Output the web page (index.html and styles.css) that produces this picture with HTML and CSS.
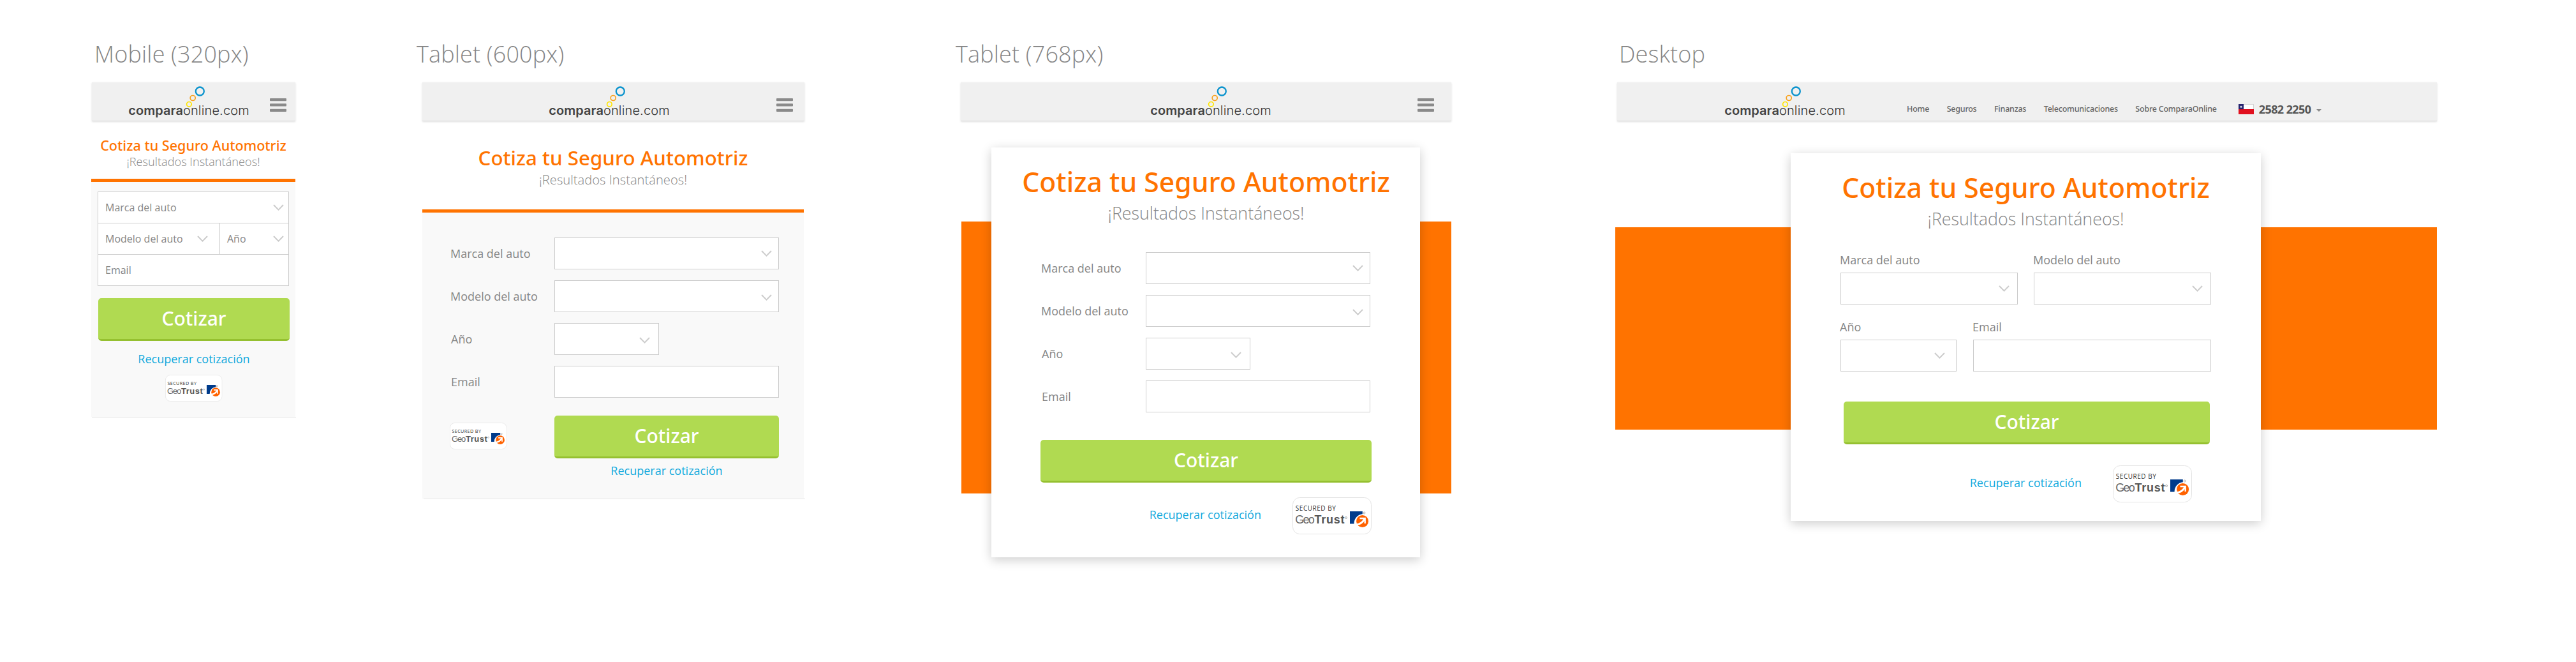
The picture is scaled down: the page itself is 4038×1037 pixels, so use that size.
FILE: index.html
```html
<!DOCTYPE html>
<html lang="es">
<head>
<meta charset="utf-8">
<title>Cotiza tu Seguro Automotriz</title>
<link rel="stylesheet" href="styles.css">
</head>
<body>

<svg class="defs" width="0" height="0" aria-hidden="true">
  <symbol id="dots" viewBox="0 0 192 54">
    <circle cx="113.3" cy="11" r="6.5" fill="none" stroke="#0a93cd" stroke-width="2.3"/>
    <circle cx="102.2" cy="21.5" r="4" fill="none" stroke="#f9a11b" stroke-width="1.7"/>
    <circle cx="96.4" cy="31.3" r="3.8" fill="none" stroke="#ffe600" stroke-width="1.7"/>
  </symbol>
  <symbol id="menu" viewBox="0 0 26 21">
    <path fill="#8a8a8a" d="M1 0h24a1 1 0 0 1 1 1v2.3a1 1 0 0 1-1 1H1a1 1 0 0 1-1-1V1a1 1 0 0 1 1-1zM1 8.3h24a1 1 0 0 1 1 1v2.3a1 1 0 0 1-1 1H1a1 1 0 0 1-1-1V9.300a1 1 0 0 1 1-1zM1 16.700h24a1 1 0 0 1 1 1V20a1 1 0 0 1-1 1H1a1 1 0 0 1-1-1v-2.300a1 1 0 0 1 1-1z"/>
  </symbol>
  <symbol id="chevron" viewBox="0 0 17 10">
    <path d="M1 1l7.500 7.600L16 1" fill="none" stroke="#ccc" stroke-width="2"/>
  </symbol>
  <symbol id="seal-mark" viewBox="0 0 124 58">
    <rect x=".5" y=".5" width="123" height="57" rx="11" fill="#fff" stroke="#e3e3e3"/>
    <path fill="#003b8b" d="M90 22h19.800v4.200A14.800 14.800 0 0 0 96.600 41.500H90z"/>
    <circle cx="109.600" cy="37.500" r="9.500" fill="#ff6200"/>
    <path fill="none" stroke="#fff" stroke-width="2.300" d="M105.500 33h8.200v8"/>
    <path fill="none" stroke="#fff" stroke-width="3" d="M113 34c-2.500 4.500-6 8.500-13.500 8.800"/>
    <circle cx="112.500" cy="24.500" r="1.500" fill="none" stroke="#999" stroke-width=".8"/>
    <circle cx="84" cy="32" r="1.500" fill="none" stroke="#999" stroke-width=".8"/>
  </symbol>
  <symbol id="flag" viewBox="0 0 24 16">
    <path fill="#fff" d="M0 0h24v8H0z"/>
    <path fill="none" stroke="#bbb" stroke-width=".7" d="M8 .4h15.600V8"/>
    <path fill="#e1101f" d="M0 8h24v8H0z"/>
    <path fill="#26246f" d="M0 0h8v8.200H0z"/>
    <path fill="#fff" d="M4 2.200l.6 1.300 1.400.1-1 1 .3 1.400L4 5.300 2.700 6 3 4.600l-1-1 1.400-.1z"/>
  </symbol>
</svg>

<main class="boards">

  <section class="board mobile">
    <h2 class="board-name">Mobile (320px)</h2>
    <header class="bar">
      <svg class="logo" viewBox="0 0 192 54"><use href="#dots"/><text x="1.300" y="47.600" class="logo-strong" textLength="85.600">compara</text><text x="86.900" y="47.600" class="logo-thin" textLength="103.800">online.com</text></svg>
      <svg class="menu"><use href="#menu"/></svg>
    </header>
    <div class="hero">
      <h1 class="title">Cotiza tu Seguro Automotriz</h1>
      <p class="subtitle">¡Resultados Instantáneos!</p>
    </div>
    <div class="panel">
      <div class="stack">
        <div class="cell wide">Marca del auto<svg class="chevron"><use href="#chevron"/></svg></div>
        <div class="cell model">Modelo del auto<svg class="chevron"><use href="#chevron"/></svg></div>
        <div class="cell year">Año<svg class="chevron"><use href="#chevron"/></svg></div>
        <div class="cell wide">Email</div>
      </div>
      <div class="button">Cotizar</div>
      <a class="link">Recuperar cotización</a>
      <svg class="seal small" viewBox="0 0 124 58"><use href="#seal-mark"/><text x="4.800" y="21.400" class="seal-top" textLength="63">SECURED BY</text><text x="4.300" y="41.300" class="seal-thin" textLength="30.500">Geo</text><text x="34.500" y="41.300" class="seal-bold" textLength="47">Trust</text></svg>
    </div>
    <div class="edge"></div>
  </section>

  <section class="board tablet-600">
    <h2 class="board-name">Tablet (600px)</h2>
    <header class="bar">
      <svg class="logo" viewBox="0 0 192 54"><use href="#dots"/><text x="1.300" y="47.600" class="logo-strong" textLength="85.600">compara</text><text x="86.900" y="47.600" class="logo-thin" textLength="103.800">online.com</text></svg>
      <svg class="menu"><use href="#menu"/></svg>
    </header>
    <div class="hero">
      <h1 class="title">Cotiza tu Seguro Automotriz</h1>
      <p class="subtitle">¡Resultados Instantáneos!</p>
    </div>
    <div class="panel">
      <div class="rows">
        <span class="label">Marca del auto</span>
        <div class="field first"><svg class="chevron"><use href="#chevron"/></svg></div>
        <span class="label">Modelo del auto</span>
        <div class="field"><svg class="chevron"><use href="#chevron"/></svg></div>
        <span class="label nudge">Año</span>
        <div class="field short"><svg class="chevron"><use href="#chevron"/></svg></div>
        <span class="label nudge">Email</span>
        <div class="field"></div>
      </div>
      <div class="submit">
        <svg class="seal small" viewBox="0 0 124 58"><use href="#seal-mark"/><text x="4.800" y="21.400" class="seal-top" textLength="63">SECURED BY</text><text x="4.300" y="41.300" class="seal-thin" textLength="30.500">Geo</text><text x="34.500" y="41.300" class="seal-bold" textLength="47">Trust</text></svg>
        <div class="submit-main">
          <div class="button">Cotizar</div>
          <a class="link">Recuperar cotización</a>
        </div>
      </div>
    </div>
    <div class="edge"></div>
  </section>

  <section class="board tablet-768">
    <h2 class="board-name">Tablet (768px)</h2>
    <header class="bar">
      <svg class="logo" viewBox="0 0 192 54"><use href="#dots"/><text x="1.300" y="47.600" class="logo-strong" textLength="85.600">compara</text><text x="86.900" y="47.600" class="logo-thin" textLength="103.800">online.com</text></svg>
      <svg class="menu"><use href="#menu"/></svg>
    </header>
    <div class="stage">
      <div class="card">
        <h1 class="title">Cotiza tu Seguro Automotriz</h1>
        <p class="subtitle">¡Resultados Instantáneos!</p>
        <div class="rows">
          <span class="label">Marca del auto</span>
          <div class="field first"><svg class="chevron"><use href="#chevron"/></svg></div>
          <span class="label">Modelo del auto</span>
          <div class="field"><svg class="chevron"><use href="#chevron"/></svg></div>
          <span class="label nudge">Año</span>
          <div class="field short"><svg class="chevron"><use href="#chevron"/></svg></div>
          <span class="label nudge">Email</span>
          <div class="field"></div>
        </div>
        <div class="button">Cotizar</div>
        <div class="foot">
          <a class="link">Recuperar cotización</a>
          <svg class="seal" viewBox="0 0 124 58"><use href="#seal-mark"/><text x="4.800" y="21.400" class="seal-top" textLength="63">SECURED BY</text><text x="4.300" y="41.300" class="seal-thin" textLength="30.500">Geo</text><text x="34.500" y="41.300" class="seal-bold" textLength="47">Trust</text></svg>
        </div>
      </div>
    </div>
  </section>

  <section class="board desktop">
    <h2 class="board-name">Desktop</h2>
    <header class="bar">
      <svg class="logo" viewBox="0 0 192 54"><use href="#dots"/><text x="1.300" y="47.600" class="logo-strong" textLength="85.600">compara</text><text x="86.900" y="47.600" class="logo-thin" textLength="103.800">online.com</text></svg>
      <nav class="nav">
        <a>Home</a><a>Seguros</a><a>Finanzas</a><a>Telecomunicaciones</a><a>Sobre ComparaOnline</a>
      </nav>
      <div class="phone">
        <svg class="flag"><use href="#flag"/></svg>
        <span class="number">2582 2250</span>
        <i class="caret"></i>
      </div>
    </header>
    <div class="stage">
      <div class="card">
        <h1 class="title">Cotiza tu Seguro Automotriz</h1>
        <p class="subtitle">¡Resultados Instantáneos!</p>
        <div class="pair models">
          <div class="group"><span class="label">Marca del auto</span><div class="field"><svg class="chevron"><use href="#chevron"/></svg></div></div>
          <div class="group"><span class="label">Modelo del auto</span><div class="field"><svg class="chevron"><use href="#chevron"/></svg></div></div>
        </div>
        <div class="pair contact">
          <div class="group"><span class="label">Año</span><div class="field short"><svg class="chevron"><use href="#chevron"/></svg></div></div>
          <div class="group"><span class="label">Email</span><div class="field"></div></div>
        </div>
        <div class="button">Cotizar</div>
        <div class="foot">
          <a class="link">Recuperar cotización</a>
          <svg class="seal" viewBox="0 0 124 58"><use href="#seal-mark"/><text x="4.800" y="21.400" class="seal-top" textLength="63">SECURED BY</text><text x="4.300" y="41.300" class="seal-thin" textLength="30.500">Geo</text><text x="34.500" y="41.300" class="seal-bold" textLength="47">Trust</text></svg>
        </div>
      </div>
    </div>
  </section>

</main>
</body>
</html>
```
FILE: styles.css
```css
* { box-sizing: border-box; }

body {
  margin: 0;
  background: #fff;
  color: #858585;
  font-family: "Open Sans", "Noto Sans", sans-serif;
}

h1, h2, p { margin: 0; }
svg { display: block; flex: none; }
.defs { position: absolute; }

.boards {
  display: flex;
  align-items: flex-start;
  padding: 63px 0 0 143px;
}
.board { flex: none; }
.mobile { width: 321px; }
.tablet-600 { width: 600px; margin-left: 198px; }
.tablet-768 { width: 769px; margin-left: 244px; }
.desktop { width: 1288px; margin-left: 257px; }

.board-name {
  margin: 0 0 22px 5px;
  font-weight: 300;
  font-size: 36px;
  line-height: 44px;
  letter-spacing: .15px;
  white-space: nowrap;
}
.tablet-600 .board-name { margin-left: -9px; }
.tablet-768 .board-name { margin-left: -8px; }
.desktop .board-name { margin-left: 6px; }

/* header bar */
.bar {
  display: flex;
  align-items: flex-start;
  height: 61px;
  background: #f0f0f0;
  border-bottom: 1px solid #dcdcdc;
  box-shadow: 0 1px 3px rgba(0, 0, 0, .12);
}
.mobile .bar { margin: 0 1px; padding: 0 14px 0 56px; }
.tablet-600 .bar { margin-right: 1px; padding: 0 18px 0 197px; }
.tablet-768 .bar { padding: 0 27px 0 296px; }
.desktop .bar { margin-left: 3px; padding-left: 167px; }

.logo { width: 192px; height: 54px; margin-top: 3px; }
.logo-strong { font: 600 20px Inter, sans-serif; fill: #444; }
.logo-thin { font: 300 20px Inter, sans-serif; fill: #333; }
.menu { width: 26px; height: 21px; margin: 25px 0 0 auto; }

.nav {
  display: flex;
  gap: 27.5px;
  margin: 32px 0 0 95px;
  font: 500 12.5px/20px "Noto Sans", sans-serif;
  letter-spacing: -.22px;
  color: #666;
  white-space: nowrap;
}
.phone { display: flex; align-items: flex-start; margin-left: 34px; }
.flag { width: 24px; height: 16px; margin-top: 34px; }
.number {
  margin: 30px 0 0 8px;
  font-weight: 700;
  font-size: 18px;
  line-height: 24px;
  letter-spacing: -.6px;
  color: #555;
}
.caret {
  margin: 42px 0 0 9px;
  border: 4px solid transparent;
  border-top-color: #8a8a8a;
  border-bottom: 0;
}

/* headings */
.title {
  font: 500 42.7px/52px "Noto Sans", sans-serif;
  text-align: center;
  white-space: nowrap;
  color: #ff7300;
}
.subtitle {
  margin-top: 7px;
  font-weight: 300;
  font-size: 26.8px;
  line-height: 32px;
  text-align: center;
}
.hero { border-bottom: 5px solid #ff7300; }
.mobile .hero { width: 320px; height: 95px; padding-top: 25px; }
.mobile .title { font-size: 21.6px; line-height: 26px; }
.mobile .subtitle { margin-top: 1px; font-size: 18.2px; line-height: 22px; }
.tablet-600 .hero { width: 598px; height: 143px; padding-top: 38px; }
.tablet-600 .title { font-size: 31.3px; line-height: 38px; }
.tablet-600 .subtitle { margin-top: 3px; font-size: 20.2px; line-height: 24px; }

/* form pieces */
.panel { background: #f9f9f9; }
.edge { height: 1px; background: #e6e6e6; }
.chevron { width: 17px; height: 10px; margin-left: auto; }
.label { font-size: 18px; line-height: 50px; white-space: nowrap; }
.rows .label { padding-left: 1px; }
.rows .nudge { padding-left: 2px; }
.field {
  display: flex;
  width: 352px;
  height: 50px;
  padding: 21px 10px 0 0;
  background: #fff;
  border: 1px solid #ccc;
}
.field.first { padding-top: 19px; }
.field.short { width: 164px; padding-right: 13px; }
.button {
  height: 67px;
  background: #b0da51;
  border-bottom: 3px solid #95c030;
  border-radius: 5px;
  font: 500 30px/63px "Noto Sans", sans-serif;
  text-align: center;
  color: #fff;
}
.link {
  font-size: 18px;
  line-height: 22px;
  white-space: nowrap;
  color: #11a9dd;
}
.seal { width: 124px; height: 58px; }
.seal.small { width: 89.5px; height: 42px; }
.seal-top { font: 400 10px "Open Sans", sans-serif; fill: #333; }
.seal-thin { font: 400 18px "Liberation Sans", sans-serif; fill: #666; }
.seal-bold { font: 700 18px "Liberation Sans", sans-serif; fill: #555; }

.rows {
  display: grid;
  grid-template-columns: 164px 352px;
  row-gap: 17px;
}

/* mobile form */
.mobile .panel {
  display: flex;
  flex-direction: column;
  align-items: center;
  width: 320px;
  height: 368px;
  padding: 15px 0 0 2px;
}
.stack {
  display: grid;
  grid-template-columns: 191px 107px;
  width: 300px;
  margin-left: -2px;
  background: #fff;
  border: 1px solid #ccc;
  border-top: 0;
}
.cell {
  display: flex;
  align-items: center;
  height: 49px;
  padding: 0 7px 0 11px;
  border-top: 1px solid #ccc;
  font-size: 16px;
  line-height: 48px;
}
.cell.wide { grid-column: 1 / -1; }
.cell.model { padding-right: 18px; border-right: 1px solid #ccc; }
.mobile .stack { border-bottom: 1px solid #ccc; height: 148px; grid-auto-rows: 49px; }
.mobile .button { width: 300px; margin-top: 19px; }
.mobile .link { margin: 17px 0 14px; }
.mobile .edge { margin-left: 1px; }

/* 600px form */
.tablet-600 .panel { width: 598px; height: 448px; padding: 39px 0 0 43px; }
.tablet-600 .edge { margin: 0 0 0 2px; width: 598px; }
.submit { display: flex; margin-top: 28px; }
.submit .seal { margin: 11px 74.5px 0 0; }
.submit-main { display: flex; flex-direction: column; width: 352px; text-align: center; gap: 8px; }

/* cards over the orange band */
.stage { background: linear-gradient(#ff7300, #ff7300) no-repeat; display: flow-root; }
.card { background: #fff; box-shadow: 0 4px 16px rgba(0, 0, 0, .2); }
.foot { display: flex; align-items: center; justify-content: flex-end; gap: 49px; }
.foot .link { margin-top: -4px; }

.tablet-768 .stage {
  width: 768px;
  height: 730px;
  margin-left: 1px;
  background-size: 100% 426px;
  background-position: 0 157px;
}
.tablet-768 .card {
  width: 672px;
  height: 642px;
  margin: 41px 0 0 47px;
  padding: 28px 76px 0 77px;
}
.tablet-768 .title { margin: 0 -60px; }
.tablet-768 .rows { grid-template-columns: 165px 352px; margin-top: 45px; }
.tablet-768 .button { margin-top: 43px; }
.tablet-768 .foot { margin-top: 23px; }

.desktop .stage {
  height: 680px;
  background-size: 100% 317px;
  background-position: 0 166px;
}
.desktop .card {
  width: 737px;
  height: 576px;
  margin: 50px 0 0 275px;
  padding: 28px 78px 0;
}
.pair { display: grid; }
.pair .label { display: block; margin: 0 0 8px -1px; line-height: 24px; }
.pair .field { width: auto; padding-top: 19px; padding-right: 12px; }
.pair .field.short { padding-right: 17px; }
.models { grid-template-columns: 278px 278px; column-gap: 25px; margin-top: 36px; }
.contact { grid-template-columns: 182px 373px; column-gap: 26px; margin-top: 23px; }
.desktop .button { margin: 47px 2px 0 5px; }
.desktop .foot { margin: 33px 30px 0 0; }
```
